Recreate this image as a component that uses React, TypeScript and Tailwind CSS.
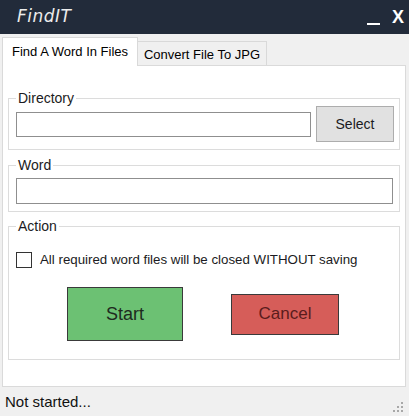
import { useState } from "react";

const ui = { fontFamily: '"Liberation Sans", Arial, sans-serif' };

function GroupBox({
  label,
  className,
  children,
}: {
  label: string;
  className?: string;
  children: React.ReactNode;
}) {
  return (
    <div className={`relative border border-[#dcdcdc] ${className ?? ""}`}>
      <span className="absolute -top-[10px] left-[7px] bg-white px-[2px] text-[14px] leading-[18px] text-[#1b1b22]">
        {label}
      </span>
      {children}
    </div>
  );
}

export default function App() {
  const [dir, setDir] = useState("");
  const [word, setWord] = useState("");
  const [confirm, setConfirm] = useState(false);
  const [status] = useState("Not started...");

  return (
    <div
      className="flex h-[416px] w-[409px] flex-col bg-[#f0f0f0] text-black"
      style={ui}
    >
      {/* title bar */}
      <div className="flex h-[34px] items-center justify-between bg-[#222b3a] pl-[17px] pr-[5px]">
        <span
          className="text-[17px] italic tracking-[0.5px] text-[#ececec]"
          style={{ fontFamily: '"DejaVu Sans", sans-serif' }}
        >
          FindIT
        </span>
        <div className="flex items-center gap-[12px] text-white">
          <span className="mt-[14px] h-[2px] w-[13px] bg-white" />
          <span className="text-[18px] font-bold leading-none">X</span>
        </div>
      </div>

      {/* tabs */}
      <div className="flex items-end pl-[2px] pt-[3px]">
        <div className="relative z-10 -mb-px flex h-[29px] w-[136px] items-center justify-center border border-b-0 border-[#d9d9d9] bg-white text-[13px]">
          Find A Word In Files
        </div>
        <div className="flex h-[24px] w-[129px] items-center justify-center border border-l-0 border-b-0 border-[#d9d9d9] bg-[#f0f0f0] pt-[2px] text-[13px]">
          Convert File To JPG
        </div>
      </div>

      {/* tab page */}
      <div className="ml-[2px] h-[322px] w-[404px] border border-[#dadada] bg-white px-[5px] pt-[32px]">
        <GroupBox label="Directory" className="h-[52px]">
          <div className="flex h-full items-center gap-[5px] pl-[7px]">
            <input
              value={dir}
              onChange={(e) => setDir(e.target.value)}
              className="h-[25px] w-[295px] border border-[#8f8f8f] bg-white px-1 text-[13px] outline-none"
            />
            <button className="h-[36px] w-[78px] border border-[#adadad] bg-[#e1e1e1] text-[14px] text-[#1b1b22]">
              Select
            </button>
          </div>
        </GroupBox>

        <GroupBox label="Word" className="mt-[15px] h-[47px] pl-[7px] pt-[12px]">
          <input
            value={word}
            onChange={(e) => setWord(e.target.value)}
            className="h-[26px] w-[377px] border border-[#8f8f8f] bg-white px-1 text-[13px] outline-none"
          />
        </GroupBox>

        <GroupBox label="Action" className="mt-[14px] h-[134px] pl-[7px] pt-[25px]">
          <label className="flex items-center gap-[8px] text-[13.3px] leading-[16px] text-[#1b1b22]">
            <input
              type="checkbox"
              checked={confirm}
              onChange={(e) => setConfirm(e.target.checked)}
              className="h-[16px] w-[16px] appearance-none border border-[#333] bg-white"
            />
            All required word files will be closed WITHOUT saving
          </label>
          <div className="mt-[19px] flex items-center gap-[48px] pl-[51px]">
            <button className="h-[54px] w-[116px] border border-[#3a3a3a] bg-[#6cc173] text-[18px] text-[#1e2a1e]">
              Start
            </button>
            <button className="h-[41px] w-[108px] border border-[#3a3a3a] bg-[#d65d59] text-[17px] text-[#5a1c1c]">
              Cancel
            </button>
          </div>
        </GroupBox>
      </div>

      {/* status bar */}
      <div className="flex flex-1 items-center justify-between pl-[5px] pr-[4px] pt-[2px]">
        <span className="text-[15px] text-[#111]">{status}</span>
        <svg width="14" height="14" viewBox="0 0 14 14" className="mt-[8px]">
          {[
            [10, 2],
            [6, 6],
            [10, 6],
            [2, 10],
            [6, 10],
            [10, 10],
          ].map(([x, y]) => (
            <rect key={`${x}-${y}`} x={x} y={y} width="2" height="2" fill="#a8a8a8" />
          ))}
        </svg>
      </div>
    </div>
  );
}
